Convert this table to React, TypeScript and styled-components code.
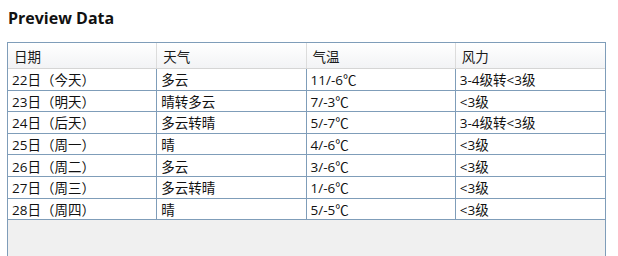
import styled, { createGlobalStyle } from 'styled-components';

const GlobalStyle = createGlobalStyle`
  html, body {
    margin: 0;
    background: #ffffff;
  }
  body {
    font-family: "Open Sans", "Noto Sans CJK SC", sans-serif;
  }
`;

const COLUMNS = ['日期', '天气', '气温', '风力'];

const ROWS = [
  ['22日（今天）', '多云', '11/-6℃', '3-4级转<3级'],
  ['23日（明天）', '晴转多云', '7/-3℃', '<3级'],
  ['24日（后天）', '多云转晴', '5/-7℃', '3-4级转<3级'],
  ['25日（周一）', '晴', '4/-6℃', '<3级'],
  ['26日（周二）', '多云', '3/-6℃', '<3级'],
  ['27日（周三）', '多云转晴', '1/-6℃', '<3级'],
  ['28日（周四）', '晴', '5/-5℃', '<3级'],
];

const App = () => {
  return (
    <>
      <GlobalStyle />
      <Page>
        <Title>Preview Data</Title>
        <Frame>
          <HeaderRow>
            {COLUMNS.map((col, i) => (
              <HeaderCell key={col} $last={i === COLUMNS.length - 1}>
                {col}
              </HeaderCell>
            ))}
          </HeaderRow>
          {ROWS.map((row) => (
            <DataRow key={row[0]}>
              {row.map((cell, i) => (
                <DataCell key={i} $last={i === row.length - 1}>
                  {cell}
                </DataCell>
              ))}
            </DataRow>
          ))}
          <EmptyArea />
        </Frame>
      </Page>
    </>
  );
};

const Page = styled.div`
  display: flex;
  flex-direction: column;
  height: 256px;
  padding: 7px 12px 0 7px;
  box-sizing: border-box;
  overflow: hidden;
`;

const Title = styled.h1`
  margin: 0 0 0 1px;
  height: 35px;
  font-family: "Open Sans", "Noto Sans", sans-serif;
  font-size: 16px;
  font-weight: 700;
  line-height: 22px;
  color: #111;
`;

const Frame = styled.div`
  flex: 1;
  display: flex;
  flex-direction: column;
  width: 599px;
  border: 1px solid #7f9db9;
  border-bottom: none;
  background: #f0f0f0;
  box-sizing: border-box;
`;

const HeaderRow = styled.div`
  display: grid;
  grid-template-columns: repeat(4, 1fr);
  height: 25px;
  background: linear-gradient(#ffffff, #f2f3f5);
  border-bottom: 1px solid #d5d5d5;
`;

const HeaderCell = styled.div<{ $last?: boolean }>`
  display: flex;
  align-items: center;
  padding-left: 6px;
  font-size: 13.5px;
  color: #1a1a1a;
  border-right: ${({ $last }) => ($last ? 'none' : '1px solid #dcdcdc')};
`;

const DataRow = styled.div`
  display: grid;
  grid-template-columns: repeat(4, 1fr);
  height: 21.6px;
  background: #ffffff;
  border-bottom: 1px solid #7f9db9;
  box-sizing: border-box;
`;

const DataCell = styled.div<{ $last?: boolean }>`
  display: flex;
  align-items: center;
  padding-left: 4px;
  font-size: 13.5px;
  color: #111;
  white-space: nowrap;
  border-right: ${({ $last }) => ($last ? 'none' : '1px solid #7f9db9')};
`;

const EmptyArea = styled.div`
  flex: 1;
  background: #f0f0f0;
`;

export default App;
